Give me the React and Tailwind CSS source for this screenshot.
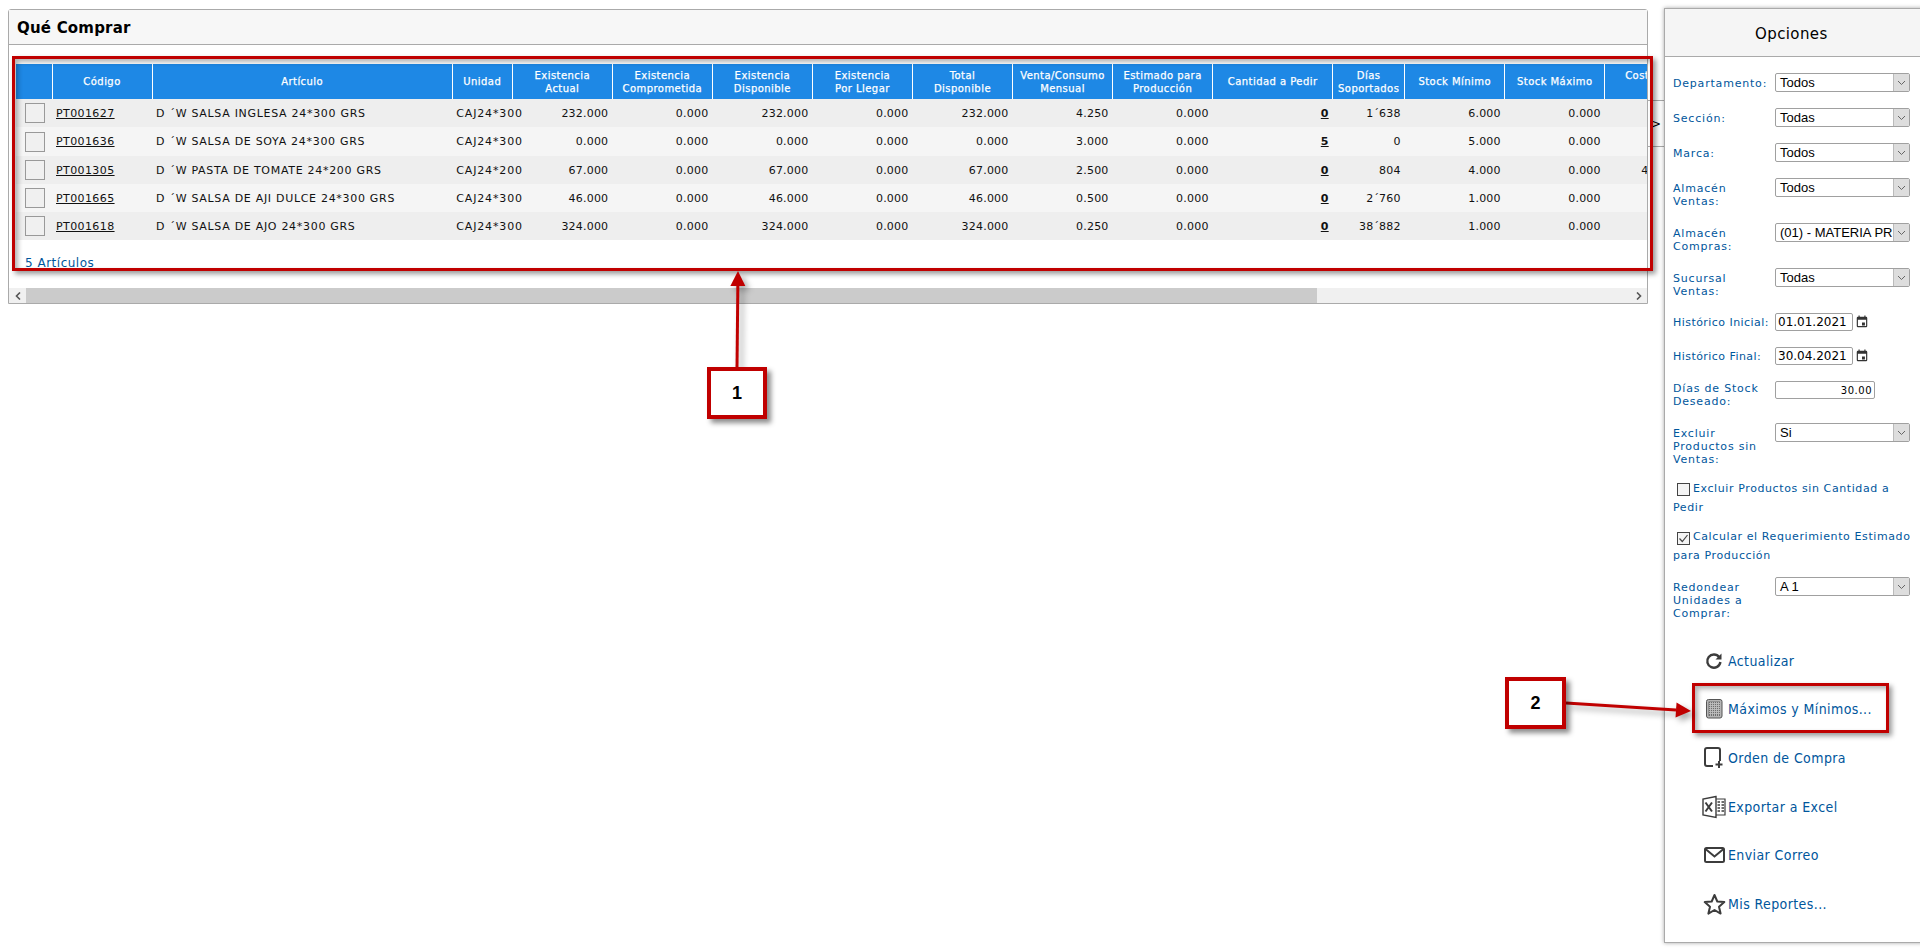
const ff = { fontFamily: '"DejaVu Sans", Verdana, sans-serif' };

const cols = [
  { w: 36 }, { w: 100, h: ['Código'] }, { w: 300, h: ['Artículo'] }, { w: 60, h: ['Unidad'] },
  { w: 100, h: ['Existencia', 'Actual'] }, { w: 100, h: ['Existencia', 'Comprometida'] },
  { w: 100, h: ['Existencia', 'Disponible'] }, { w: 100, h: ['Existencia', 'Por Llegar'] },
  { w: 100, h: ['Total', 'Disponible'] }, { w: 100, h: ['Venta/Consumo', 'Mensual'] },
  { w: 100, h: ['Estimado para', 'Producción'] }, { w: 120, h: ['Cantidad a Pedir'] },
  { w: 72, h: ['Días', 'Soportados'] }, { w: 100, h: ['Stock Mínimo'] }, { w: 100, h: ['Stock Máximo'] },
  { w: 100, h: ['Costo Unit.', '\u00a0'] },
];

const rows = [
  ['PT001627', 'D ´W SALSA INGLESA 24*300 GRS', 'CAJ24*300', '232.000', '0.000', '232.000', '0.000', '232.000', '4.250', '0.000', '0', '1´638', '6.000', '0.000', ''],
  ['PT001636', 'D ´W SALSA DE SOYA 24*300 GRS', 'CAJ24*300', '0.000', '0.000', '0.000', '0.000', '0.000', '3.000', '0.000', '5', '0', '5.000', '0.000', ''],
  ['PT001305', 'D ´W PASTA DE TOMATE 24*200 GRS', 'CAJ24*200', '67.000', '0.000', '67.000', '0.000', '67.000', '2.500', '0.000', '0', '804', '4.000', '0.000', '4´120.000'],
  ['PT001665', 'D ´W SALSA DE AJI DULCE 24*300 GRS', 'CAJ24*300', '46.000', '0.000', '46.000', '0.000', '46.000', '0.500', '0.000', '0', '2´760', '1.000', '0.000', ''],
  ['PT001618', 'D ´W SALSA DE AJO 24*300 GRS', 'CAJ24*300', '324.000', '0.000', '324.000', '0.000', '324.000', '0.250', '0.000', '0', '38´882', '1.000', '0.000', ''],
];
const rowH = ['h-[28px]', 'h-[29px]', 'h-[28px]', 'h-[28px]', 'h-[28px]'];

function Table() {
  return (
    <table className="table-fixed border-collapse w-[1689px] text-[11px] tracking-[0.2px]">
      <colgroup>{cols.map((c, i) => <col key={i} style={{ width: c.w }} />)}</colgroup>
      <thead>
        <tr className="h-[35px] bg-[#1e88e5] text-white">
          {cols.map((c, i) => (
            <th key={i} className="border-l border-white first:border-l-0 p-0 text-center font-normal text-[10px] leading-[13px] tracking-[0.45px] [-webkit-text-stroke:0.25px_white] whitespace-nowrap">
              {c.h && c.h.map((l, j) => <div key={j}>{l}</div>)}
            </th>
          ))}
        </tr>
      </thead>
      <tbody>
        {rows.map((r, i) => (
          <tr key={i} className={`${rowH[i]} ${i % 2 ? 'bg-[#f5f5f5]' : 'bg-[#eeeeee]'} text-[#111111]`}>
            <td className="p-0 pl-[9px]"><div className="w-[20px] h-[20px] border border-[#999999] bg-[#f0f0f0]" /></td>
            <td className="p-0 pt-[2px] pl-[4px] tracking-[0.4px]"><span className="underline text-[#111111]">{r[0]}</span></td>
            <td className="p-0 pt-[2px] pl-[4px] tracking-[0.7px] whitespace-nowrap">{r[1]}</td>
            <td className="p-0 pt-[2px] pl-[4px] tracking-[0.85px] whitespace-nowrap">{r[2]}</td>
            {r.slice(3).map((v, j) => (
              <td key={j} className={`p-0 pt-[2px] pr-[4px] text-right whitespace-nowrap ${j === 7 ? 'font-bold underline' : ''}`}>{v}</td>
            ))}
          </tr>
        ))}
      </tbody>
    </table>
  );
}

function Chevron({ className }) {
  return <svg className={className} width="6" height="8" viewBox="0 0 6 8"><path d="M5 0.5 1.5 4 5 7.5" fill="none" stroke="#555555" strokeWidth="1.6" /></svg>;
}

function ScrollBar() {
  return (
    <div className="flex h-[15px] bg-[#f0f0f0]">
      <div className="w-[17px] flex items-center justify-center"><Chevron /></div>
      <div className="w-[1291px] bg-[#cbcbcb]" />
      <div className="flex-1 flex items-center justify-end pr-[5px]"><Chevron className="rotate-180" /></div>
    </div>
  );
}

function Select({ value }) {
  return (
    <div className="w-[135px] h-[19px] border border-[#a0a0a0] rounded-[2px] bg-white flex items-center overflow-hidden">
      <span className="flex-1 pl-[4px] text-[13px] text-black whitespace-nowrap overflow-hidden" style={{ fontFamily: '"Liberation Sans", sans-serif' }}>{value}</span>
      <span className="w-[16px] h-full shrink-0 bg-[#dddddd] border-l border-[#bbbbbb] flex items-center justify-center">
        <svg width="9" height="6" viewBox="0 0 9 6"><path d="M1 1 4.5 4.5 8 1" fill="none" stroke="#666666" strokeWidth="1" /></svg>
      </span>
    </div>
  );
}

function FormRow({ label, h, pt = 'pt-[4px]', tight, children }) {
  return (
    <div className={`flex ${h}`}>
      <div className={`w-[102px] shrink-0 text-[11px] leading-[13px] text-[#00569c] ${tight ? 'tracking-[0.45px] whitespace-nowrap' : 'tracking-[0.8px]'} ${pt}`}>{label}</div>
      <div>{children}</div>
    </div>
  );
}

function DateField({ value }) {
  return (
    <div className="flex items-center gap-[2px]">
      <div className="w-[78px] h-[18px] border border-[#a0a0a0] rounded-[2px] bg-white flex items-center pl-[2px] text-[12px] text-black">{value}</div>
      <svg width="14" height="14" viewBox="0 0 24 24"><path fill="#333333" d="M19 3h-1V1h-2v2H8V1H6v2H5a2 2 0 0 0-2 2v14a2 2 0 0 0 2 2h14a2 2 0 0 0 2-2V5a2 2 0 0 0-2-2zm0 16H5V8h14v11zM12 13h5v5h-5z" /></svg>
    </div>
  );
}

function Check({ checked }) {
  return (
    <span className="inline-flex align-[-4px] ml-[4px] mr-[3px] w-[13px] h-[13px] border border-[#444444] bg-[#f4f4f4] items-center justify-center">
      {checked && <svg width="11" height="11" viewBox="0 0 11 11"><path d="M1.5 5.5 4.3 8.5 9.5 2" fill="none" stroke="#444444" strokeWidth="1.2" /></svg>}
    </span>
  );
}

const icons = {
  refresh: <svg width="18" height="18" viewBox="0 0 18 18"><path d="M14.2 5.2A6.6 6.6 0 1 0 15.4 10" fill="none" stroke="#3c3c3c" strokeWidth="2.4" /><path d="M16.5 1.5v6h-6z" fill="#3c3c3c" /></svg>,
  calc: <svg width="17" height="20" viewBox="0 0 17 20"><rect x="0.5" y="0.5" width="15.5" height="18.5" rx="2" fill="#b5b5b5" stroke="#555555" /><rect x="2.5" y="2.5" width="11.5" height="14.5" fill="#6e6e6e" /><path d="M3 4.500h11M3 6.500h11M3 8.500h11M3 10.500h11M3 12.500h11M3 14.500h11M4.500 3v14M6.500 3v14M8.500 3v14M10.500 3v14M12.500 3v14" stroke="#bdbdbd" strokeWidth="0.9" /></svg>,
  order: <svg width="20" height="22" viewBox="0 0 20 22"><path d="M9 19H3a2 2 0 0 1-2-2V3a2 2 0 0 1 2-2h11a2 2 0 0 1 2 2v11" fill="none" stroke="#3c3c3c" strokeWidth="2" /><path d="M15 14v7M11.500 17.500h7" stroke="#3c3c3c" strokeWidth="2" /></svg>,
  excel: <svg width="24" height="24" viewBox="0 0 24 24"><path d="M14 1.500 1 4v16l13 2.500z" fill="none" stroke="#3c3c3c" strokeWidth="1.4" /><path d="M14 4h9v16h-9" fill="none" stroke="#3c3c3c" strokeWidth="1.2" /><path d="M3.500 7.500l6.500 9M10 7.500l-6.500 9" stroke="#3c3c3c" strokeWidth="2" /><path d="M15.500 7h2.500M19.500 7h2.500M15.500 10h2.500M19.500 10h2.500M15.500 13h2.500M19.500 13h2.500M15.500 16h2.500M19.500 16h2.500" stroke="#3c3c3c" strokeWidth="1.5" /></svg>,
  mail: <svg width="21" height="16" viewBox="0 0 21 16"><rect x="1" y="1" width="19" height="14" rx="1.500" fill="none" stroke="#3c3c3c" strokeWidth="2" /><path d="M1.500 2 10.500 9.500 19.500 2" fill="none" stroke="#3c3c3c" strokeWidth="2" /></svg>,
  star: <svg width="23" height="22" viewBox="0 0 23 22"><path d="M11.500 2 14.300 8.500 21.300 9.100 16 13.700 17.600 20.600 11.500 17 5.400 20.600 7 13.700 1.700 9.100 8.700 8.500z" fill="none" stroke="#3c3c3c" strokeWidth="2" strokeLinejoin="round" /></svg>,
};

function Action({ icon, label, mt }) {
  return (
    <div className={`flex items-center h-[24px] ${mt}`}>
      <div className="ml-[34px] w-[24px] shrink-0 flex justify-center items-center">{icons[icon]}</div>
      <span className="ml-[2px] text-[14px] tracking-[0.4px] text-[#00569c] whitespace-nowrap" style={{ fontFamily: '"DejaVu Sans Condensed", "DejaVu Sans", sans-serif' }}>{label}</span>
    </div>
  );
}

function Arrow({ x1, y1, x2, y2, w, h, className }) {
  const a = Math.atan2(y2 - y1, x2 - x1);
  const L = 15, H = 7.5;
  const bx = x2 - L * Math.cos(a), by = y2 - L * Math.sin(a);
  const px = -Math.sin(a) * H, py = Math.cos(a) * H;
  return (
    <svg className={className} width={w} height={h} viewBox={`0 0 ${w} ${h}`} style={{ filter: 'drop-shadow(4px 4px 3px rgba(0,0,0,0.35))' }}>
      <line x1={x1} y1={y1} x2={bx} y2={by} stroke="#c00000" strokeWidth="3" />
      <polygon points={`${x2},${y2} ${bx + px},${by + py} ${bx - px},${by - py}`} fill="#c00000" />
    </svg>
  );
}

export default function App() {
  return (
    <div className="relative w-[1920px] h-[948px] bg-white overflow-hidden flex items-start pl-[8px] pt-[8px]" style={ff}>
      {/* Main panel */}
      <div className="w-[1640px] mt-[1px] border border-[#aaaaaa] rounded-t-[3px] bg-white shrink-0">
        <div className="h-[35px] pt-[2px] bg-[#f7f7f7] border-b border-[#aaaaaa] flex items-center pl-[8px] text-[15px] font-bold text-black tracking-[0.2px]">Qué Comprar</div>
        <div className="h-[243px] pt-[19px] pl-[7px] overflow-hidden relative">
          <Table />
          <div className="mt-[16px] pl-[9px] text-[12px] leading-[14px] tracking-[0.5px] text-[#00569c]">5 Artículos</div>
        </div>
        <ScrollBar />
      </div>

      {/* Collapse tab */}
      <div className="w-[16px] h-[47px] mt-[92px] shrink-0 border-y border-[#aaaaaa] bg-white flex items-center text-[12px] text-black pl-[3px]">&gt;</div>

      {/* Options sidebar */}
      <div className="w-[270px] h-[935px] shrink-0 border border-[#aaaaaa] bg-white shadow-[0_0_4px_rgba(0,0,0,0.35)]">
        <div className="h-[48px] pt-[4px] bg-[#f5f5f5] border-b border-[#aaaaaa] flex items-center pl-[90px] text-[15px] tracking-[0.4px] text-black">Opciones</div>
        <div className="pl-[8px] pt-[16px]">
          <FormRow label="Departamento:" h="h-[35px]"><Select value="Todos" /></FormRow>
          <FormRow label="Sección:" h="h-[35px]"><Select value="Todas" /></FormRow>
          <FormRow label="Marca:" h="h-[35px]"><Select value="Todos" /></FormRow>
          <FormRow label={<>Almacén<br />Ventas:</>} h="h-[45px]"><Select value="Todos" /></FormRow>
          <FormRow label={<>Almacén<br />Compras:</>} h="h-[45px]"><Select value="(01) - MATERIA PRIMA" /></FormRow>
          <FormRow label={<>Sucursal<br />Ventas:</>} h="h-[45px]"><Select value="Todas" /></FormRow>
          <FormRow label="Histórico Inicial:" h="h-[34px]" pt="pt-[3px]" tight><DateField value="01.01.2021" /></FormRow>
          <FormRow label="Histórico Final:" h="h-[34px]" pt="pt-[3px]" tight><DateField value="30.04.2021" /></FormRow>
          <FormRow label={<>Días de Stock<br />Deseado:</>} h="h-[42px]" pt="pt-[1px]">
            <div className="w-[100px] h-[18px] border border-[#a0a0a0] rounded-[2px] bg-white flex items-center justify-end pr-[2px] text-[10px] tracking-[0.5px] text-black">30.00</div>
          </FormRow>
          <FormRow label={<>Excluir<br />Productos sin<br />Ventas:</>} h="h-[56px]"><Select value="Si" /></FormRow>
          <div className="whitespace-nowrap text-[11px] leading-[19px] tracking-[0.6px] text-[#00569c]"><Check />Excluir Productos sin Cantidad a<br />Pedir</div>
          <div className="whitespace-nowrap mt-[10px] text-[11px] leading-[19px] tracking-[0.6px] text-[#00569c]"><Check checked />Calcular el Requerimiento Estimado<br />para Producción</div>
          <div className="mt-[12px]">
            <FormRow label={<>Redondear<br />Unidades a<br />Comprar:</>} h="h-[72px]"><Select value="A 1" /></FormRow>
          </div>
        </div>
        <div className="pl-[3px] flex flex-col">
          <Action icon="refresh" label="Actualizar" />
          <Action icon="calc" label="Máximos y Mínimos..." mt="mt-[24px]" />
          <Action icon="order" label="Orden de Compra" mt="mt-[25px]" />
          <Action icon="excel" label="Exportar a Excel" mt="mt-[25px]" />
          <Action icon="mail" label="Enviar Correo" mt="mt-[24px]" />
          <Action icon="star" label="Mis Reportes..." mt="mt-[25px]" />
        </div>
      </div>

      {/* Annotations laid over the page */}
      <div className="absolute left-[12px] top-[56px] w-[1641px] h-[215px] border-[3px] border-[#c00000] shadow-[3px_3px_5px_rgba(0,0,0,0.4),inset_3px_3px_5px_rgba(0,0,0,0.3)]" />
      <div className="absolute left-[1692px] top-[683px] w-[197px] h-[50px] border-[3px] border-[#c00000] shadow-[3px_3px_5px_rgba(0,0,0,0.4),inset_3px_3px_5px_rgba(0,0,0,0.3)]" />
      <Arrow className="absolute left-[720px] top-[268px] overflow-visible" x1={17} y1={99} x2={18} y2={3} w={40} h={100} />
      <Arrow className="absolute left-[1566px] top-[695px] overflow-visible" x1={0} y1={8} x2={125} y2={16} w={130} h={30} />
      <div className="absolute left-[707px] top-[367px] w-[60px] h-[52px] border-[4px] border-[#c00000] bg-white shadow-[4px_4px_5px_rgba(0,0,0,0.45)] flex items-center justify-center text-[18px] font-bold text-black" style={{ fontFamily: '"Liberation Sans", sans-serif' }}>1</div>
      <div className="absolute left-[1505px] top-[677px] w-[61px] h-[52px] border-[4px] border-[#c00000] bg-white shadow-[4px_4px_5px_rgba(0,0,0,0.45)] flex items-center justify-center text-[18px] font-bold text-black" style={{ fontFamily: '"Liberation Sans", sans-serif' }}>2</div>
    </div>
  );
}
